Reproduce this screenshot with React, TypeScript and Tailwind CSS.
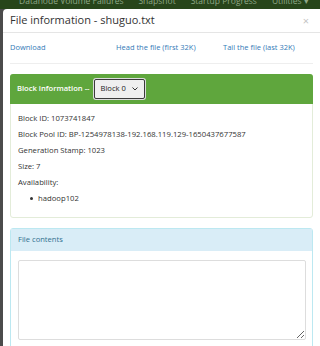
import React from "react";

const navItems = ["Datanode Volume Failures", "Snapshot", "Startup Progress", "Utilities ▾"];

const blockInfo = [
  "Block ID: 1073741847",
  "Block Pool ID: BP-1254978138-192.168.119.129-1650437677587",
  "Generation Stamp: 1023",
  "Size: 7",
];

export default function App() {
  return (
    <div
      className="w-[320px] h-[346px] overflow-hidden bg-[#4b4b4b] flex flex-col"
      style={{ fontFamily: '"Open Sans", "Noto Sans", sans-serif' }}
    >
      {/* navbar peeking out above the modal */}
      <div className="h-[9px] shrink-0 bg-[#27451a] relative overflow-hidden">
        <div className="absolute left-[19px] -top-[4px] flex gap-[15px] text-[8.5px] leading-[10px] text-[#8fa888] whitespace-nowrap">
          {navItems.map((n) => (
            <span key={n}>{n}</span>
          ))}
        </div>
      </div>

      <div className="ml-[3px] w-[320px] flex-1 bg-white rounded-tl-[4px] text-[#333]">
        {/* header */}
        <div className="h-[24px] flex items-center justify-between pl-[7px] pr-[14px] border-b border-[#e5e5e5]">
          <h4 className="text-[11px] text-[#333]">File information - shuguo.txt</h4>
          <span className="text-[11px] text-[#c4c4c4] leading-none">×</span>
        </div>

        {/* body */}
        <div className="pl-[7px] pr-[10px]">
          <div className="flex text-[7.5px] text-[#337ab7] h-[31px] items-center border-b border-[#eeeeee]">
            <a className="w-[106px]">Download</a>
            <a className="w-[107px]">Head the file (first 32K)</a>
            <a>Tail the file (last 32K)</a>
          </div>

          {/* block information panel */}
          <div className="mt-[10px] w-[303px] border border-[#e3ecd9] rounded-[3px]">
            <div className="h-[30px] bg-[#5fa63d] flex items-center px-[7px] -m-px rounded-t-[3px] text-white text-[7.6px] font-semibold">
              <span>Block information --</span>
              <div className="ml-[4px] w-[51px] h-[20px] border border-[#3a3a3a] rounded-[2px] bg-[#efefef] flex items-center justify-between px-[6px] text-[#222] font-normal shadow-[0_0_0_1px_#dcdcdc]">
                <span>Block 0</span>
                <svg width="6" height="4" viewBox="0 0 6 4" fill="none" stroke="#333" strokeWidth="1">
                  <path d="M0.5 0.5 L3 3 L5.5 0.5" />
                </svg>
              </div>
            </div>
            <div className="px-[7px] pt-[7px] pb-[11px] text-[7.7px] leading-[16px]">
              {blockInfo.map((l) => (
                <p key={l}>{l}</p>
              ))}
              <p>Availability:</p>
              <ul className="pl-[12px]">
                <li className="flex items-center gap-[5px]">
                  <span className="w-[3px] h-[3px] rounded-full bg-[#333]" />
                  hadoop102
                </li>
              </ul>
            </div>
          </div>

          {/* file contents panel */}
          <div className="mt-[10px] w-[303px] border border-[#bce8f1] rounded-t-[3px] h-[140px]">
            <div className="h-[22px] bg-[#d9edf7] flex items-center px-[7px] text-[7.6px] text-[#31708f]">
              File contents
            </div>
            <div className="px-[7px] pt-[9px]">
              <textarea
                readOnly
                className="block w-[288px] h-[80px] border border-[#dddddd] rounded-[2px] resize-y bg-white"
              />
            </div>
          </div>
        </div>
      </div>
    </div>
  );
}
